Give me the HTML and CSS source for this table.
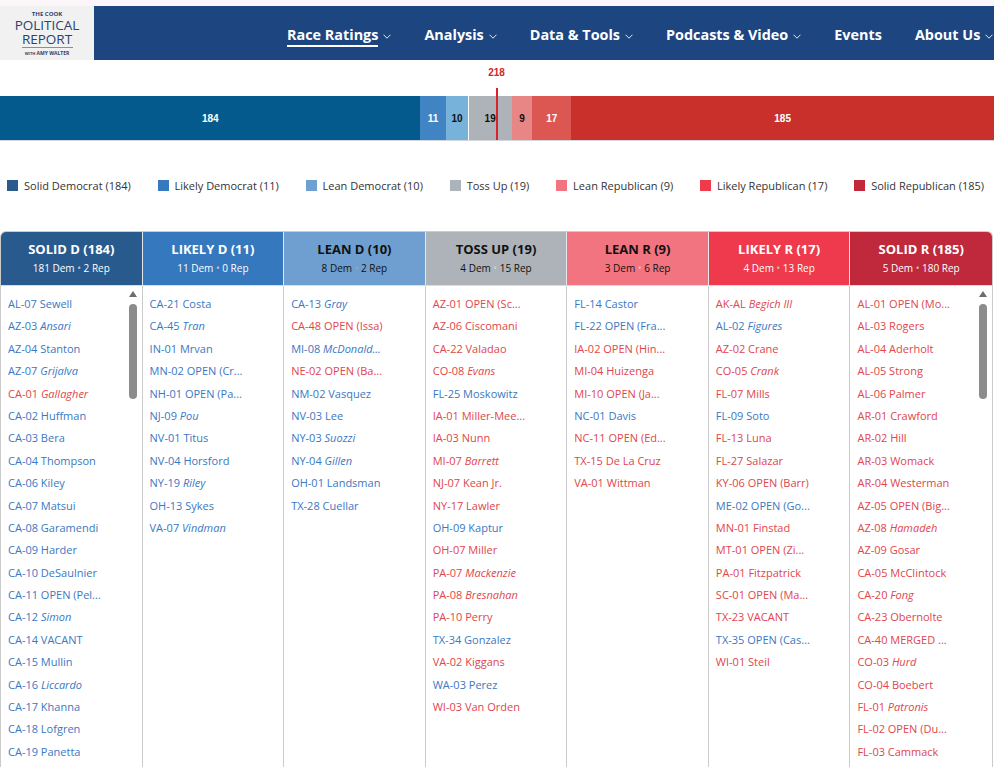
FILE: index.html
```html
<!DOCTYPE html>
<html lang="en">
<head>
<meta charset="utf-8">
<title>Race Ratings</title>
<link rel="stylesheet" href="styles.css">
</head>
<body>
<div class="topstrip"></div>
<header class="site-header">
  <div class="logo">
    <span class="l1">THE COOK</span>
    <span class="l2">POLITICAL<br>REPORT</span>
    <span class="rule"></span>
    <span class="l4"><small>WITH</small> AMY WALTER</span>
  </div>
  <ul class="menu">
    <li><a class="active" href="#">Race Ratings</a><svg class="chev" width="8" height="5" viewBox="0 0 8 5"><path d="M0.5 0.7 L4 4.2 L7.5 0.7" /></svg></li>
    <li><a href="#">Analysis</a><svg class="chev" width="8" height="5" viewBox="0 0 8 5"><path d="M0.5 0.7 L4 4.2 L7.5 0.7" /></svg></li>
    <li><a href="#">Data &amp; Tools</a><svg class="chev" width="8" height="5" viewBox="0 0 8 5"><path d="M0.5 0.7 L4 4.2 L7.5 0.7" /></svg></li>
    <li><a href="#">Podcasts &amp; Video</a><svg class="chev" width="8" height="5" viewBox="0 0 8 5"><path d="M0.5 0.7 L4 4.2 L7.5 0.7" /></svg></li>
    <li><a href="#">Events</a></li>
    <li><a href="#">About Us</a><svg class="chev" width="8" height="5" viewBox="0 0 8 5"><path d="M0.5 0.7 L4 4.2 L7.5 0.7" /></svg></li>
  </ul>
</header>

<section class="chart">
  <div class="threshold"><span class="threshold-label">218</span><span class="threshold-line"></span></div>
  <div class="bar">
    <div class="seg solid-d" style="flex:184">184</div>
    <div class="seg likely-d" style="flex:11">11</div>
    <div class="seg lean-d dark" style="flex:10">10</div>
    <div class="seg toss dark" style="flex:19">19</div>
    <div class="seg lean-r dark" style="flex:9">9</div>
    <div class="seg likely-r" style="flex:17">17</div>
    <div class="seg solid-r" style="flex:185">185</div>
  </div>
</section>

<ul class="legend">
  <li><span class="sw sw-sd"></span>Solid Democrat (184)</li>
  <li><span class="sw sw-ld"></span>Likely Democrat (11)</li>
  <li><span class="sw sw-lnd"></span>Lean Democrat (10)</li>
  <li><span class="sw sw-t"></span>Toss Up (19)</li>
  <li><span class="sw sw-lnr"></span>Lean Republican (9)</li>
  <li><span class="sw sw-lr"></span>Likely Republican (17)</li>
  <li><span class="sw sw-sr"></span>Solid Republican (185)</li>
</ul>

<div class="ratings">
  <div class="col">
    <div class="col-head h-sd"><span class="ttl">SOLID D (184)</span><span class="sub">181 Dem <span class="dot">•</span> 2 Rep</span></div>
    <ul class="col-body">
      <li class="d">AL-07 Sewell</li>
      <li class="d">AZ-03 <i>Ansari</i></li>
      <li class="d">AZ-04 Stanton</li>
      <li class="d">AZ-07 <i>Grijalva</i></li>
      <li class="r">CA-01 <i>Gallagher</i></li>
      <li class="d">CA-02 Huffman</li>
      <li class="d">CA-03 Bera</li>
      <li class="d">CA-04 Thompson</li>
      <li class="d">CA-06 Kiley</li>
      <li class="d">CA-07 Matsui</li>
      <li class="d">CA-08 Garamendi</li>
      <li class="d">CA-09 Harder</li>
      <li class="d">CA-10 DeSaulnier</li>
      <li class="d">CA-11 OPEN (Pel...</li>
      <li class="d">CA-12 <i>Simon</i></li>
      <li class="d">CA-14 VACANT</li>
      <li class="d">CA-15 Mullin</li>
      <li class="d">CA-16 <i>Liccardo</i></li>
      <li class="d">CA-17 Khanna</li>
      <li class="d">CA-18 Lofgren</li>
      <li class="d">CA-19 Panetta</li>
      <li class="d">CA-24 Carbajal</li>
      <li class="d">CA-25 Ruiz</li>
      <li class="scroll"><span class="up"></span><span class="thumb"></span></li>
    </ul>
  </div>
  <div class="col">
    <div class="col-head h-ld"><span class="ttl">LIKELY D (11)</span><span class="sub">11 Dem <span class="dot">•</span> 0 Rep</span></div>
    <ul class="col-body">
      <li class="d">CA-21 Costa</li>
      <li class="d">CA-45 <i>Tran</i></li>
      <li class="d">IN-01 Mrvan</li>
      <li class="d">MN-02 OPEN (Cr...</li>
      <li class="d">NH-01 OPEN (Pa...</li>
      <li class="d">NJ-09 <i>Pou</i></li>
      <li class="d">NV-01 Titus</li>
      <li class="d">NV-04 Horsford</li>
      <li class="d">NY-19 <i>Riley</i></li>
      <li class="d">OH-13 Sykes</li>
      <li class="d">VA-07 <i>Vindman</i></li>
    </ul>
  </div>
  <div class="col">
    <div class="col-head h-lnd"><span class="ttl">LEAN D (10)</span><span class="sub">8 Dem <span class="dot">•</span> 2 Rep</span></div>
    <ul class="col-body">
      <li class="d">CA-13 <i>Gray</i></li>
      <li class="r">CA-48 OPEN (Issa)</li>
      <li class="d">MI-08 <i>McDonald...</i></li>
      <li class="r">NE-02 OPEN (Ba...</li>
      <li class="d">NM-02 Vasquez</li>
      <li class="d">NV-03 Lee</li>
      <li class="d">NY-03 <i>Suozzi</i></li>
      <li class="d">NY-04 <i>Gillen</i></li>
      <li class="d">OH-01 Landsman</li>
      <li class="d">TX-28 Cuellar</li>
    </ul>
  </div>
  <div class="col">
    <div class="col-head h-t"><span class="ttl">TOSS UP (19)</span><span class="sub">4 Dem <span class="dot">•</span> 15 Rep</span></div>
    <ul class="col-body">
      <li class="r">AZ-01 OPEN (Sc...</li>
      <li class="r">AZ-06 Ciscomani</li>
      <li class="r">CA-22 Valadao</li>
      <li class="r">CO-08 <i>Evans</i></li>
      <li class="d">FL-25 Moskowitz</li>
      <li class="r">IA-01 Miller-Mee...</li>
      <li class="r">IA-03 Nunn</li>
      <li class="r">MI-07 <i>Barrett</i></li>
      <li class="r">NJ-07 Kean Jr.</li>
      <li class="r">NY-17 Lawler</li>
      <li class="d">OH-09 Kaptur</li>
      <li class="r">OH-07 Miller</li>
      <li class="r">PA-07 <i>Mackenzie</i></li>
      <li class="r">PA-08 <i>Bresnahan</i></li>
      <li class="r">PA-10 Perry</li>
      <li class="d">TX-34 Gonzalez</li>
      <li class="r">VA-02 Kiggans</li>
      <li class="d">WA-03 Perez</li>
      <li class="r">WI-03 Van Orden</li>
    </ul>
  </div>
  <div class="col">
    <div class="col-head h-lnr"><span class="ttl">LEAN R (9)</span><span class="sub">3 Dem <span class="dot">•</span> 6 Rep</span></div>
    <ul class="col-body">
      <li class="d">FL-14 Castor</li>
      <li class="d">FL-22 OPEN (Fra...</li>
      <li class="r">IA-02 OPEN (Hin...</li>
      <li class="r">MI-04 Huizenga</li>
      <li class="r">MI-10 OPEN (Ja...</li>
      <li class="d">NC-01 Davis</li>
      <li class="r">NC-11 OPEN (Ed...</li>
      <li class="r">TX-15 De La Cruz</li>
      <li class="r">VA-01 Wittman</li>
    </ul>
  </div>
  <div class="col">
    <div class="col-head h-lr"><span class="ttl">LIKELY R (17)</span><span class="sub">4 Dem <span class="dot">•</span> 13 Rep</span></div>
    <ul class="col-body">
      <li class="r">AK-AL <i>Begich III</i></li>
      <li class="d">AL-02 <i>Figures</i></li>
      <li class="r">AZ-02 Crane</li>
      <li class="r">CO-05 <i>Crank</i></li>
      <li class="r">FL-07 Mills</li>
      <li class="d">FL-09 Soto</li>
      <li class="r">FL-13 Luna</li>
      <li class="r">FL-27 Salazar</li>
      <li class="r">KY-06 OPEN (Barr)</li>
      <li class="d">ME-02 OPEN (Go...</li>
      <li class="r">MN-01 Finstad</li>
      <li class="r">MT-01 OPEN (Zi...</li>
      <li class="r">PA-01 Fitzpatrick</li>
      <li class="r">SC-01 OPEN (Ma...</li>
      <li class="r">TX-23 VACANT</li>
      <li class="d">TX-35 OPEN (Cas...</li>
      <li class="r">WI-01 Steil</li>
    </ul>
  </div>
  <div class="col">
    <div class="col-head h-sr"><span class="ttl">SOLID R (185)</span><span class="sub">5 Dem <span class="dot">•</span> 180 Rep</span></div>
    <ul class="col-body">
      <li class="r">AL-01 OPEN (Mo...</li>
      <li class="r">AL-03 Rogers</li>
      <li class="r">AL-04 Aderholt</li>
      <li class="r">AL-05 Strong</li>
      <li class="r">AL-06 Palmer</li>
      <li class="r">AR-01 Crawford</li>
      <li class="r">AR-02 Hill</li>
      <li class="r">AR-03 Womack</li>
      <li class="r">AR-04 Westerman</li>
      <li class="r">AZ-05 OPEN (Big...</li>
      <li class="r">AZ-08 <i>Hamadeh</i></li>
      <li class="r">AZ-09 Gosar</li>
      <li class="r">CA-05 McClintock</li>
      <li class="r">CA-20 <i>Fong</i></li>
      <li class="r">CA-23 Obernolte</li>
      <li class="r">CA-40 MERGED ...</li>
      <li class="r">CO-03 <i>Hurd</i></li>
      <li class="r">CO-04 Boebert</li>
      <li class="r">FL-01 <i>Patronis</i></li>
      <li class="r">FL-02 OPEN (Du...</li>
      <li class="r">FL-03 Cammack</li>
      <li class="r">FL-04 Bean</li>
      <li class="r">FL-05 Rutherford</li>
      <li class="scroll"><span class="up"></span><span class="thumb"></span></li>
    </ul>
  </div>
</div>
</body>
</html>
```

FILE: styles.css
```css
* { box-sizing: border-box; margin: 0; padding: 0; }
html, body { overflow: hidden; }
body {
  width: 994px;
  height: 767px;
  background: #fff;
  color: #333;
  font-family: "Open Sans", "Liberation Sans", Arial, sans-serif;
}

.topstrip { height: 6px; background: #fcf5fa; }

.site-header {
  height: 54px;
  background: #1d4580;
  display: flex;
  align-items: stretch;
}
.logo {
  flex: 0 0 94px;
  width: 94px;
  background: #f1f1f1;
  display: flex;
  flex-direction: column;
  align-items: center;
  padding-top: 4px;
  color: #2b4170;
  text-align: center;
}
.logo .l1 { font-size: 6px; line-height: 8px; font-weight: 700; }
.logo .l2 { font-size: 13.5px; line-height: 14px; }
.logo .rule { width: 51px; height: 1px; background: #e26a6a; margin-top: 1px; }
.logo .l4 { font-size: 5px; line-height: 6px; font-weight: 700; margin-top: 2px; }
.logo .l4 small { font-size: 4px; }

.menu {
  display: flex;
  align-items: center;
  list-style: none;
  margin-left: 193px;
  gap: 33px;
  flex: 0 0 auto;
}
.menu li { display: flex; align-items: center; flex: 0 0 auto; white-space: nowrap; }
.menu a {
  color: #fff;
  text-decoration: none;
  font-size: 14.4px;
  font-weight: 700;
  line-height: 20px;
  padding-top: 5px;
  padding-bottom: 0;
  border-bottom: 2px solid transparent;
  white-space: nowrap;
}
.menu a.active { border-bottom-color: #fff; }
.chev { margin-left: 5px; margin-top: 6px; flex: 0 0 auto; }
.chev path { fill: none; stroke: #e3e8f0; stroke-width: 1; }

/* seat bar */
.chart { position: relative; padding-top: 36px; }
.bar {
  display: flex;
  height: 45px;
  border-bottom: 1px solid #d3d8de;
}
.seg {
  min-width: 0;
  flex-basis: 0;
  display: flex;
  align-items: center;
  justify-content: center;
  font: 700 10px "Liberation Sans", Arial, sans-serif;
  color: #fff;
}
.seg.dark { color: #111; }
.solid-d { background: #045a8d; }
.likely-d { background: #4084c3; }
.lean-d { background: #76b2d9; }
.toss { background: #adb3b9; box-shadow: inset 1px 0 0 #fff; }
.lean-r { background: #e88585; }
.likely-r { background: #dc5652; }
.solid-r { background: #c9302c; }

.threshold { position: absolute; left: 496px; top: 0; width: 0; height: 80px; }
.threshold-label {
  position: absolute;
  top: 7px;
  left: -12px;
  width: 25px;
  text-align: center;
  font: 700 10px/12px "Liberation Sans", Arial, sans-serif;
  color: #d2232a;
}
.threshold-line {
  position: absolute;
  top: 28px;
  left: 0;
  width: 1.5px;
  height: 52px;
  background: #d8232a;
  z-index: 2;
}

/* legend */
.legend {
  list-style: none;
  display: flex;
  justify-content: space-between;
  align-items: center;
  height: 22px;
  margin: 33px 10px 0 7px;
  font-size: 11px;
  color: #333;
}
.legend li { display: flex; align-items: center; gap: 6px; white-space: nowrap; }
.sw { width: 11px; height: 11px; display: block; }
.sw-sd { background: #2b5a8c; }
.sw-ld { background: #3679be; }
.sw-lnd { background: #6fa0d2; }
.sw-t { background: #adb3ba; }
.sw-lnr { background: #f27480; }
.sw-lr { background: #ef3a4c; }
.sw-sr { background: #c1283a; }

/* ratings table */
.ratings {
  margin-top: 35px;
  width: 993px;
  display: grid;
  grid-template-columns: repeat(7, 1fr);
  border: 1px solid #cbcbcb;
  border-bottom: 0;
  border-radius: 6px 6px 0 0;
  overflow: hidden;
}
.col { display: flex; flex-direction: column; min-width: 0; }
.col-head {
  height: 54px;
  padding-top: 8px;
  border-bottom: 1px solid #dddddd;
  border-right: 1px solid #e4e7eb;
  display: flex;
  flex-direction: column;
  align-items: center;
  color: #fff;
}
.col:last-child .col-head { border-right: 0; }
.ttl { font-size: 13px; font-weight: 700; line-height: 18px; }
.sub { font-size: 10px; line-height: 14px; margin-top: 3px; }
.dot { color: #c4c6c9; }
.h-sd { background: #285a8e; }
.h-ld { background: #3578bd; }
.h-lnd { background: #6e9fd0; color: #111; }
.h-lnd .dot { color: #9aa8b8; }
.h-t { background: #adb3b9; color: #111; }
.h-t .dot { color: #d0d3d6; }
.h-lnr { background: #f27480; color: #111; }
.h-lnr .dot { color: #f4b9be; }
.h-lr { background: #ee3a4c; }
.h-sr { background: #c0283b; }

.col-body {
  position: relative;
  list-style: none;
  height: 500px;
  overflow: hidden;
  padding: 7px 0 0 7px;
  border-right: 1px solid #cbcbcb;
}
.col:last-child .col-body { border-right: 0; }
.col-body li {
  height: 22.4px;
  line-height: 22.4px;
  font-size: 11px;
  white-space: nowrap;
}
.col-body .d { color: #3a78c2; }
.col-body .r { color: #e0464c; }

/* scrollbar drawn over the list */
.col-body li.scroll {
  position: absolute;
  top: 5px;
  right: 4px;
  width: 9px;
  height: auto;
  display: flex;
  flex-direction: column;
  align-items: center;
}
.scroll .up {
  width: 0;
  height: 0;
  border-left: 4.5px solid transparent;
  border-right: 4.5px solid transparent;
  border-bottom: 6px solid #6d6d6d;
}
.scroll .thumb {
  margin-top: 7px;
  width: 8px;
  height: 95px;
  background: #8c8c8c;
  border-radius: 4px;
}
```
